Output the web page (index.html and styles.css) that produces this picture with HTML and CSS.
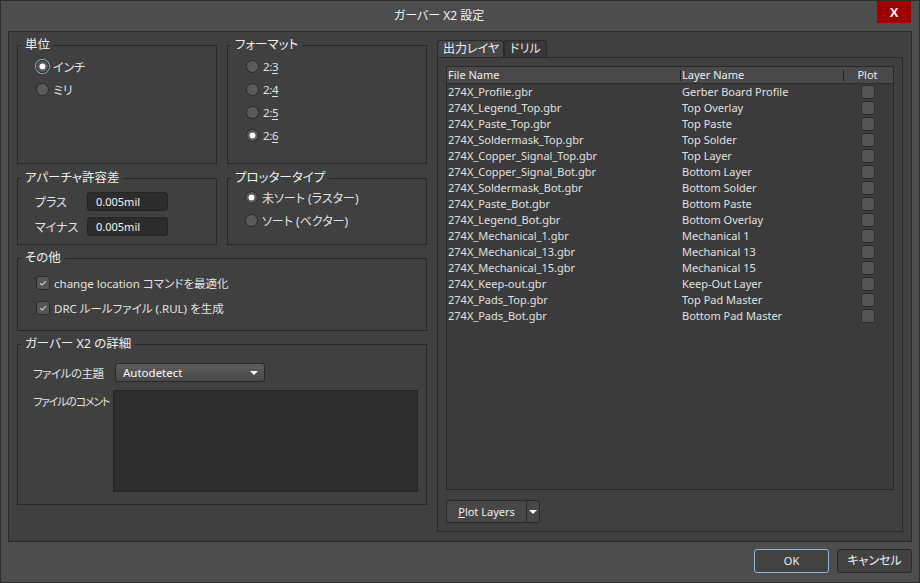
FILE: index.html
```html
<!DOCTYPE html>
<html lang="ja">
<head>
<meta charset="utf-8">
<title>ガーバー X2 設定</title>
<link rel="stylesheet" href="styles.css">
</head>
<body>
<div class="window">
  <div class="titlebar">
    <div class="title">ガーバー X2 設定</div>
    <div class="close">X</div>
  </div>
  <div class="panel">
    <div class="left">
      <div class="row2 r-top">
        <fieldset class="group g-unit">
          <legend>単位</legend>
          <div class="opts">
            <div class="radio"><span class="rb checked focus"></span>インチ</div>
            <div class="radio"><span class="rb"></span>ミリ</div>
          </div>
        </fieldset>
        <fieldset class="group g-format">
          <legend>フォーマット</legend>
          <div class="opts">
            <div class="radio"><span class="rb"></span><span class="ratio">2:<u>3</u></span></div>
            <div class="radio"><span class="rb"></span><span class="ratio">2:<u>4</u></span></div>
            <div class="radio"><span class="rb"></span><span class="ratio">2:<u>5</u></span></div>
            <div class="radio"><span class="rb checked"></span><span class="ratio">2:<u>6</u></span></div>
          </div>
        </fieldset>
      </div>
      <div class="row2 r-mid">
        <fieldset class="group g-aperture">
          <legend>アパーチャ許容差</legend>
          <div class="fields">
            <div class="field"><span class="flabel">プラス</span><span class="input">0.005mil</span></div>
            <div class="field"><span class="flabel">マイナス</span><span class="input">0.005mil</span></div>
          </div>
        </fieldset>
        <fieldset class="group g-plotter">
          <legend>プロッタータイプ</legend>
          <div class="opts">
            <div class="radio"><span class="rb checked"></span>未ソート (ラスター)</div>
            <div class="radio"><span class="rb"></span>ソート (ベクター)</div>
          </div>
        </fieldset>
      </div>
      <fieldset class="group g-misc">
        <legend>その他</legend>
        <div class="checks">
          <div class="check"><span class="cb"><svg width="14" height="14" viewBox="0 0 14 14"><polyline points="3.5,7.2 6,9.4 10.3,4.8" fill="none" stroke="#d8d8d8" stroke-width="1.2"/></svg></span>change location コマンドを最適化</div>
          <div class="check"><span class="cb"><svg width="14" height="14" viewBox="0 0 14 14"><polyline points="3.5,7.2 6,9.4 10.3,4.8" fill="none" stroke="#d8d8d8" stroke-width="1.2"/></svg></span>DRC ルールファイル (.RUL) を生成</div>
        </div>
      </fieldset>
      <fieldset class="group g-x2">
        <legend>ガーバー X2 の詳細</legend>
        <div class="x2">
          <div class="x2row"><span class="x2label">ファイルの主題</span><span class="select"><span>Autodetect</span><span class="tri"></span></span></div>
          <div class="x2row top"><span class="x2label c">ファイルのコメント</span><span class="textarea"></span></div>
        </div>
      </fieldset>
    </div>
    <div class="right">
      <div class="tabs">
        <div class="tab active">出力レイヤ</div>
        <div class="tab">ドリル</div>
      </div>
      <div class="pane">
        <div class="table">
          <div class="thead">
            <div class="th">File Name</div>
            <div class="th sep">Layer Name</div>
            <div class="th sep center">Plot</div>
          </div>
          <div class="tbody">
            <div class="tr"><span>274X_Profile.gbr</span><span>Gerber Board Profile</span><span class="pc"><span class="pbox"></span></span></div>
            <div class="tr"><span>274X_Legend_Top.gbr</span><span>Top Overlay</span><span class="pc"><span class="pbox"></span></span></div>
            <div class="tr"><span>274X_Paste_Top.gbr</span><span>Top Paste</span><span class="pc"><span class="pbox"></span></span></div>
            <div class="tr"><span>274X_Soldermask_Top.gbr</span><span>Top Solder</span><span class="pc"><span class="pbox"></span></span></div>
            <div class="tr"><span>274X_Copper_Signal_Top.gbr</span><span>Top Layer</span><span class="pc"><span class="pbox"></span></span></div>
            <div class="tr"><span>274X_Copper_Signal_Bot.gbr</span><span>Bottom Layer</span><span class="pc"><span class="pbox"></span></span></div>
            <div class="tr"><span>274X_Soldermask_Bot.gbr</span><span>Bottom Solder</span><span class="pc"><span class="pbox"></span></span></div>
            <div class="tr"><span>274X_Paste_Bot.gbr</span><span>Bottom Paste</span><span class="pc"><span class="pbox"></span></span></div>
            <div class="tr"><span>274X_Legend_Bot.gbr</span><span>Bottom Overlay</span><span class="pc"><span class="pbox"></span></span></div>
            <div class="tr"><span>274X_Mechanical_1.gbr</span><span>Mechanical 1</span><span class="pc"><span class="pbox"></span></span></div>
            <div class="tr"><span>274X_Mechanical_13.gbr</span><span>Mechanical 13</span><span class="pc"><span class="pbox"></span></span></div>
            <div class="tr"><span>274X_Mechanical_15.gbr</span><span>Mechanical 15</span><span class="pc"><span class="pbox"></span></span></div>
            <div class="tr"><span>274X_Keep-out.gbr</span><span>Keep-Out Layer</span><span class="pc"><span class="pbox"></span></span></div>
            <div class="tr"><span>274X_Pads_Top.gbr</span><span>Top Pad Master</span><span class="pc"><span class="pbox"></span></span></div>
            <div class="tr"><span>274X_Pads_Bot.gbr</span><span>Bottom Pad Master</span><span class="pc"><span class="pbox"></span></span></div>
          </div>
        </div>
        <div class="split">
          <span class="smain"><u>P</u>lot Layers</span>
          <span class="sarrow"><span class="tri"></span></span>
        </div>
      </div>
    </div>
  </div>
  <div class="footer">
    <div class="btn ok">OK</div>
    <div class="btn">キャンセル</div>
  </div>
</div>
</body>
</html>
```
FILE: styles.css
```css
* { box-sizing: border-box; }
html, body { margin: 0; padding: 0; background: #4d4d4d; }
body {
  font-family: "Noto Sans", "Noto Sans CJK JP", sans-serif;
  font-size: 12px;
  color: #e2e2e2;
  font-feature-settings: "palt";
}
.window {
  width: 920px; height: 583px;
  background: #4d4d4d;
  border: 1px solid #2e2e2e;
  display: flex; flex-direction: column;
}
.titlebar { height: 30px; flex: none; display: flex; align-items: flex-start; }
.title { flex: 1; text-align: center; line-height: 29px; color: #f2f2f2; }
.close {
  width: 34px; height: 22px; margin-right: 8px;
  background: #a00000; color: #fff;
  font-family: "Liberation Sans", sans-serif; font-weight: bold; font-size: 13px;
  display: flex; align-items: center; justify-content: center;
}
.panel {
  margin: 0 7px; height: 511px; flex: none;
  background: #404040; border: 1px solid #2c2c2c;
  display: flex; gap: 10px; padding: 0 8px;
}
.left { width: 410px; display: flex; flex-direction: column; }
.right { width: 466px; padding-top: 8px; }

.row2 { display: flex; gap: 10px; }
.r-top { margin-top: 5px; height: 127px; }
.r-mid { margin-top: 6px; height: 75px; }
.group {
  margin: 0; padding: 0; min-width: 0;
  border: 1px solid #282828;
}
.row2 .group { width: 200px; height: 100%; }
.group legend {
  margin-left: 3px; padding: 0 4px;
  line-height: 16px; font-size: 12.5px; color: #efefef;
}
.g-misc { margin-top: 5px; height: 81px; }
.g-x2 { margin-top: 5px; height: 169px; }

.opts { padding-left: 18px; }
.g-unit .opts, .g-format .opts { padding-top: 2px; }
.g-plotter .opts { padding-left: 17px; }
.radio { display: flex; align-items: center; gap: 4px; height: 23px; white-space: nowrap; }
.ratio { font-size: 11.5px; letter-spacing: -0.4px; }
.radio u { text-underline-offset: 2px; }
.rb {
  width: 13px; height: 13px; border-radius: 50%;
  background: #5a5a5a; border: 1px solid #2a2a2a; flex: none;
}
.rb.checked { background: radial-gradient(circle, #ffffff 0 2.7px, #5a5a5a 3.3px); }
.rb.focus { box-shadow: 0 0 0 1px #8ea6c4; }

.fields { padding: 6px 0 0 17px; display: flex; flex-direction: column; gap: 6px; }
.field { display: flex; align-items: center; height: 19px; }
.flabel { width: 52px; }
.input {
  width: 81px; height: 19px; line-height: 17px;
  background: #2c2c2c; border: 1px solid #242424; border-radius: 3px;
  padding-left: 8px; color: #f4f4f4; font-size: 11px;
}

.checks { padding: 4px 0 0 18px; }
.check { display: flex; align-items: center; gap: 4px; height: 25px; font-size: 11.5px; white-space: nowrap; }
.cb {
  width: 14px; height: 14px; border-radius: 3px; flex: none;
  background: #565656; border: 1px solid #2b2b2b;
  display: flex; align-items: center; justify-content: center;
}
.cb svg { display: block; }

.x2 { padding: 11px 0 0 15px; }
.x2row { display: flex; align-items: center; }
.x2row.top { align-items: flex-start; margin-top: 8px; }
.x2label { width: 82px; font-size: 11.5px; letter-spacing: -0.5px; white-space: nowrap; }
.x2label.c { width: 80px; padding-top: 3px; font-size: 11px; letter-spacing: -1.2px; }
.select {
  width: 150px; height: 19px;
  border: 1px solid #2a2a2a; border-radius: 3px;
  background: linear-gradient(#5b5b5b, #494949);
  display: flex; align-items: center; justify-content: space-between;
  padding: 0 6px 0 7px; color: #fafafa; font-size: 11.5px;
}
.tri {
  width: 0; height: 0;
  border-left: 4px solid transparent; border-right: 4px solid transparent;
  border-top: 4px solid #ffffff;
}
.textarea {
  width: 305px; height: 102px;
  background: #2e2e2e; border: 1px solid #262626;
}

.tabs { display: flex; height: 17px; }
.tab {
  height: 17px; line-height: 16px; font-size: 12px; white-space: nowrap;
  border: 1px solid #2a2a2a; border-bottom: none;
  border-radius: 3px 3px 0 0;
  padding: 0 5px; background: #383838; color: #e8e8e8;
}
.tab.active { width: 67px; background: #474747; color: #f4f4f4; }
.tab + .tab { width: 43px; margin-left: 0; }

.pane {
  height: 475px; border: 1px solid #2a2a2a;
  padding: 8px;
}
.table {
  height: 424px; border: 1px solid #2a2a2a; background: #3b3b3b;
  font-size: 11px;
}
.thead, .tr { display: grid; grid-template-columns: 233px 163px 49px; }
.thead { height: 17px; background: #494949; border-bottom: 1px solid #2e2e2e; line-height: 16px; color: #ececec; }
.th { padding-left: 1px; }
.th.sep {
  padding-left: 2px;
  background: linear-gradient(#1f1f1f, #1f1f1f) no-repeat 0 3px / 1px 11px;
}
.th.center { text-align: center; padding-left: 0; }
.tr { height: 16px; line-height: 16px; color: #e0e0e0; }
.tr > span:first-child { padding-left: 1px; }
.tr > span:nth-child(2) { padding-left: 2px; }
.pc { display: flex; align-items: center; justify-content: center; padding-left: 1px; }
.pbox {
  width: 14px; height: 14px; border-radius: 3px;
  background: #545454; border: 1px solid #2e2e2e;
}

.split {
  margin-top: 10px; width: 94px; height: 23px;
  display: flex; border: 1px solid #2a2a2a; border-radius: 3px;
  background: #474747; font-size: 11px;
}
.smain { width: 79px; text-align: center; line-height: 21px; color: #eeeeee; }
.sarrow {
  flex: 1; border-left: 1px solid #2a2a2a;
  display: flex; align-items: center; justify-content: center;
}

.footer { display: flex; justify-content: flex-end; gap: 8px; padding: 7px 7px 0 0; }
.btn {
  width: 75px; height: 24px; line-height: 22px; text-align: center;
  border: 1px solid #2a2a2a; border-radius: 3px; background: #424242; color: #efefef;
}
.btn.ok { border-color: #8fb4d6; font-size: 11px; }
```
